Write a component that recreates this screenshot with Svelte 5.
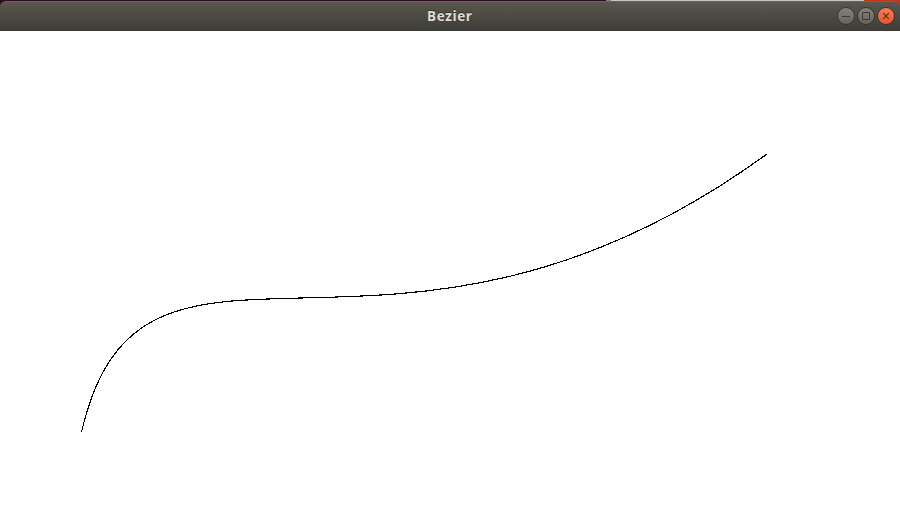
<script>
  const start = [81.5, 432];
  const c1 = [142, 171];
  const c2 = [391, 428];
  const end = [767, 154];
  const top = 31;
  const pt = ([x, y]) => `${x} ${y - top}`;
  const curve = `M${pt(start)}C${pt(c1)} ${pt(c2)} ${pt(end)}`;
</script>

<div class="window">
  <div class="desktop"></div>
  <header class="titlebar">
    <svg class="title" width="52" height="30" viewBox="0 0 52 30">
      <text class="shadow" x="3" y="18.6" textLength="45" lengthAdjust="spacing">Bezier</text>
      <text x="3" y="19.6" textLength="45" lengthAdjust="spacing">Bezier</text>
    </svg>
    <div class="buttons">
      <span class="btn"><svg width="18" height="18" viewBox="0 0 18 18"><path d="M5 9.5h8" /></svg></span>
      <span class="btn"><svg width="18" height="18" viewBox="0 0 18 18"><path d="M5.5 5.5h7v7h-7z" /></svg></span>
      <span class="btn close"><svg width="18" height="18" viewBox="0 0 18 18"><path d="M6.2 6.2l5.6 5.6M11.8 6.2l-5.6 5.6" /></svg></span>
    </div>
  </header>
  <main>
    <svg width="900" height="499" viewBox="0 0 900 499">
      <path class="curve" d={curve} />
    </svg>
  </main>
</div>

<style>
  .window {
    width: 900px;
    height: 530px;
    overflow: hidden;
    display: flex;
    flex-direction: column;
    background: linear-gradient(90deg, #300a24 0 606px, #858083 606px 611px, #c4c5c2 611px 864px, #c23616 864px);
    font-family: "Open Sans", "Noto Sans", sans-serif;
  }
  .desktop { height: 1px; flex: none; }
  .titlebar {
    height: 30px;
    box-sizing: border-box;
    flex: none;
    position: relative;
    display: flex;
    align-items: center;
    justify-content: center;
    border-radius: 6px 6px 0 0;
    border-top: 1px solid #68665b;
    background: linear-gradient(#5a574f, #3d3c37);
  }
  .title { display: block; margin-top: -1px; }
  .title text { font-size: 13.5px; font-weight: 700; fill: #dfdbd2; }
  .title .shadow { fill: #302f2b; }
  .buttons {
    position: absolute;
    right: 5px;
    top: 5px;
    display: flex;
    gap: 2px;
  }
  .btn {
    width: 18px;
    height: 18px;
    box-sizing: border-box;
    border-radius: 50%;
    border: 1px solid #37352f;
    background: linear-gradient(#85827a, #65635c);
  }
  .btn svg { display: block; margin: -1px; fill: none; stroke: #3a3934; stroke-width: 1; }
  .close { background: linear-gradient(#fb7c52, #e9572b); }
  .close svg { stroke: #5a2c1a; stroke-width: 1.2; }
  main { flex: 1; background: #fff; }
  main svg { display: block; }
  .curve { fill: none; stroke: #000; stroke-width: 1.15; shape-rendering: crispEdges; }
</style>
